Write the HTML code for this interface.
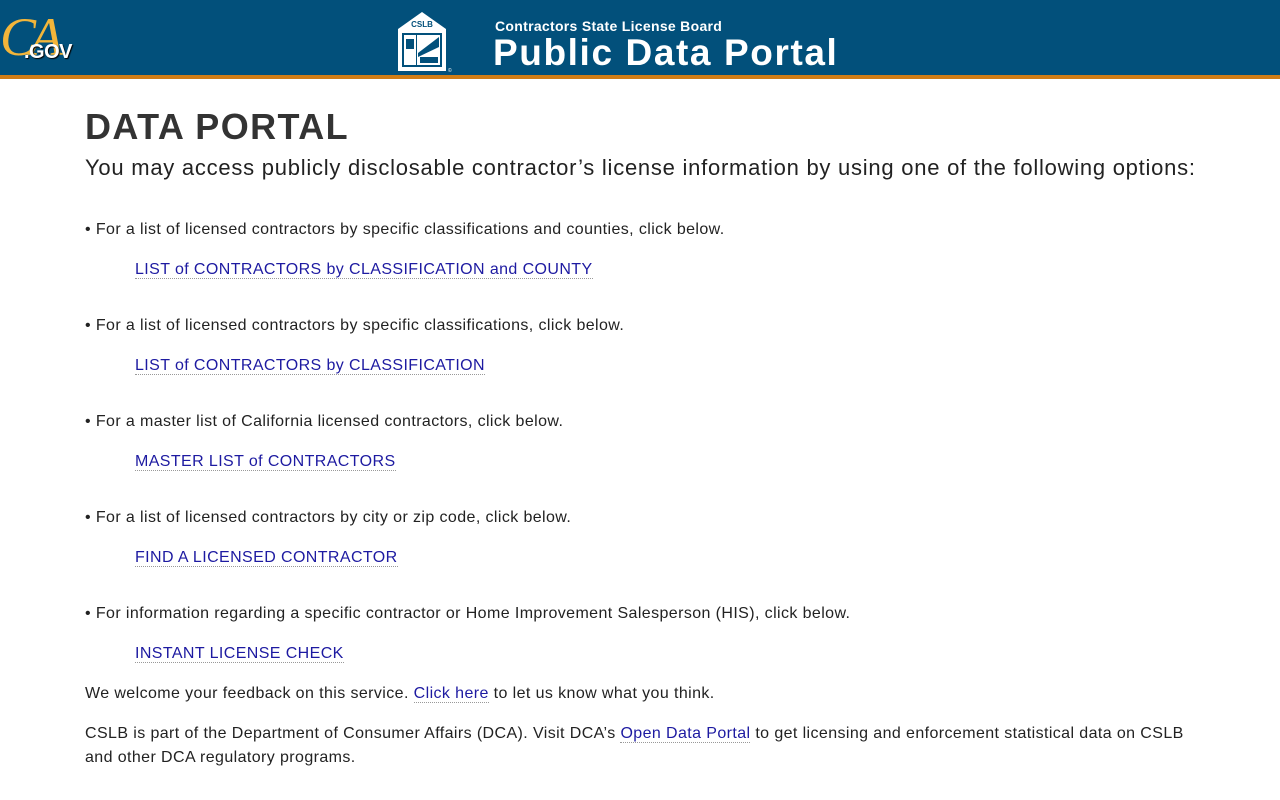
<!DOCTYPE html>
<html><head><meta charset="utf-8"><style>
body{margin:0;font-family:"Liberation Sans",Arial,sans-serif;background:#fff;color:#222}
.hdr{height:75px;background:#02507b;border-bottom:4px solid #d17d16;position:relative}
.ca{position:absolute;left:0px;top:10px;color:#f2b53a;font-family:"Liberation Serif",serif;font-style:italic;font-size:54px;line-height:1;letter-spacing:-6px}
.gov{position:absolute;left:24px;top:41px;color:#fff;font-weight:bold;font-size:20px;letter-spacing:-0.5px;text-shadow:1px 1px 1px #000}
.logo{position:absolute;left:394px;top:11px}
.t1{position:absolute;left:495px;top:18px;color:#fff;font-weight:bold;font-size:14px;letter-spacing:0.3px}
.t2{position:absolute;left:493px;top:32px;color:#fff;font-weight:bold;font-size:37px;letter-spacing:1.6px}
h1{margin:0;position:absolute;top:106px;left:85px;font-size:36px;font-weight:900;color:#333;letter-spacing:1.4px}
.sub{position:absolute;top:156px;left:85px;font-size:22px;color:#222;margin:0;letter-spacing:0.75px}
p{margin:0;font-size:16px;position:absolute;left:85px;line-height:24px;letter-spacing:0.4px}
a{color:#1d1aa1;text-decoration:none;border-bottom:1px dotted #999}
.l{left:135px}
</style></head><body>
<div class="hdr">
<div class="ca">CA</div><div class="gov">.GOV</div>
<svg class="logo" width="58" height="62" viewBox="0 0 58 62"><polygon points="28,1 52,18 52,60 4,60 4,18" fill="#fff"/><rect x="8" y="22" width="40" height="34" fill="#02507b"/><text x="28" y="16" font-size="8" font-weight="bold" text-anchor="middle" fill="#02507b" font-family="Liberation Sans">CSLB</text><rect x="10" y="24" width="12" height="30" fill="#fff"/><rect x="23" y="24" width="23" height="30" fill="#fff"/><rect x="12" y="28" width="8" height="10" fill="#02507b"/><polygon points="24,42 45,26 45,36 24,46" fill="#02507b"/><rect x="26" y="46" width="18" height="6" fill="#02507b"/><text x="54" y="61" font-size="5" fill="#fff">©</text></svg>
<div class="t1">Contractors State License Board</div>
<div class="t2">Public Data Portal</div>
</div>
<h1>DATA PORTAL</h1>
<p class="sub">You may access publicly disclosable contractor’s license information by using one of the following options:</p>
<p style="top:218px">• For a list of licensed contractors by specific classifications and counties, click below.</p>
<p class="l" style="top:258px"><a>LIST of CONTRACTORS by CLASSIFICATION and COUNTY</a></p>
<p style="top:314px">• For a list of licensed contractors by specific classifications, click below.</p>
<p class="l" style="top:354px"><a>LIST of CONTRACTORS by CLASSIFICATION</a></p>
<p style="top:410px">• For a master list of California licensed contractors, click below.</p>
<p class="l" style="top:450px"><a>MASTER LIST of CONTRACTORS</a></p>
<p style="top:506px">• For a list of licensed contractors by city or zip code, click below.</p>
<p class="l" style="top:546px"><a>FIND A LICENSED CONTRACTOR</a></p>
<p style="top:602px">• For information regarding a specific contractor or Home Improvement Salesperson (HIS), click below.</p>
<p class="l" style="top:642px"><a>INSTANT LICENSE CHECK</a></p>
<p style="top:682px">We welcome your feedback on this service. <a>Click here</a> to let us know what you think.</p>
<p style="top:722px;width:1110px">CSLB is part of the Department of Consumer Affairs (DCA). Visit DCA’s <a>Open Data Portal</a> to get licensing and enforcement statistical data on CSLB and other DCA regulatory programs.</p>
</body></html>
